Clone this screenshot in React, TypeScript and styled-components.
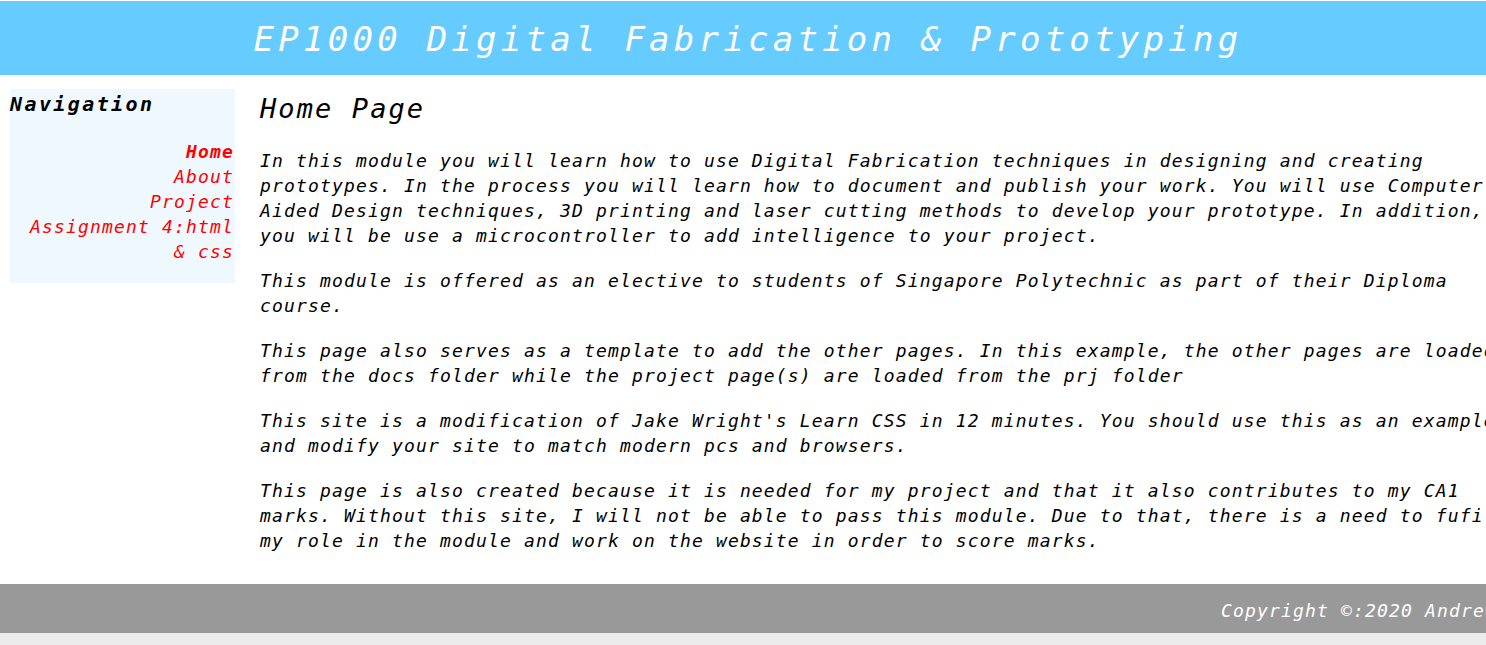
import React from "react";
import styled, { createGlobalStyle } from "styled-components";

const GlobalStyle = createGlobalStyle`
  html {
    background-color: #ececec;
    overflow: hidden;
  }
  body {
    margin: 0;
    font-family: "DejaVu Sans Mono", "Liberation Mono", monospace;
    font-style: italic;
    color: #000;
  }
`;

const Page = styled.div`
  background-color: #fff;
  padding-top: 1px;
`;

const Header = styled.header`
  display: flex;
  align-items: center;
  justify-content: center;
  height: 74px;
  background-color: #66ccff;
`;

const Title = styled.h1`
  margin: 0;
  padding: 2px 0 0 10px;
  font-size: 34px;
  font-weight: 400;
  letter-spacing: 4.25px;
  color: #fff;
  white-space: nowrap;
`;

const Body = styled.div`
  display: flex;
  align-items: flex-start;
  gap: 25px;
  padding: 14px 0 11px 10px;
`;

const Nav = styled.nav`
  flex-shrink: 0;
  width: 224px;
  padding: 0 1px 19px 0;
  background-color: #f0f8ff;
`;

const NavTitle = styled.h3`
  margin: 3px 0 22px;
  font-size: 20px;
  line-height: 25px;
  font-weight: 700;
  letter-spacing: 2.4px;
`;

const NavList = styled.ul`
  list-style: none;
  margin: 0;
  padding: 0;
  text-align: right;
`;

const NavLink = styled.a<{ $active?: boolean }>`
  font-size: 18px;
  line-height: 25px;
  letter-spacing: 1.16px;
  font-weight: ${(p) => (p.$active ? 700 : 400)};
  color: #ff0000;
  text-decoration: none;
`;

const Main = styled.main`
  flex-shrink: 0;
  width: 1258px;
`;

const Heading = styled.h2`
  margin: 3px 0 22px;
  font-size: 27px;
  line-height: 34px;
  font-weight: 400;
  letter-spacing: 2.1px;
`;

const Para = styled.p`
  margin: 0 0 20px;
  font-size: 18px;
  line-height: 25px;
  letter-spacing: 1.16px;
`;

const Footer = styled.footer`
  display: flex;
  height: 49px;
  box-sizing: border-box;
  padding-top: 14px;
  background-color: #999999;
`;

const FooterText = styled.p`
  margin: 0 0 0 1221px;
  font-size: 18px;
  line-height: 25px;
  letter-spacing: 1.16px;
  color: #fff;
  white-space: nowrap;
`;

const Bottom = styled.div`
  height: 12px;
  background-color: #ececec;
`;

const links = [
  { label: "Home", active: true },
  { label: "About" },
  { label: "Project" },
  { label: "Assignment 4:html & css" },
];

export default function App() {
  return (
    <>
      <GlobalStyle />
      <Page>
        <Header>
          <Title>EP1000 Digital Fabrication &amp; Prototyping</Title>
        </Header>
        <Body>
          <Nav>
            <NavTitle>Navigation</NavTitle>
            <NavList>
              {links.map((l) => (
                <li key={l.label}>
                  <NavLink href="#" $active={l.active}>
                    {l.label}
                  </NavLink>
                </li>
              ))}
            </NavList>
          </Nav>
          <Main>
            <Heading>Home Page</Heading>
            <Para>
              In this module you will learn how to use Digital Fabrication
              techniques in designing and creating prototypes. In the process
              you will learn how to document and publish your work. You will
              use Computer Aided Design techniques, 3D printing and laser
              cutting methods to develop your prototype. In addition, you will
              be use a microcontroller to add intelligence to your project.
            </Para>
            <Para>
              This module is offered as an elective to students of Singapore
              Polytechnic as part of their Diploma course.
            </Para>
            <Para>
              This page also serves as a template to add the other pages. In
              this example, the other pages are loaded from the docs folder
              while the project page(s) are loaded from the prj folder
            </Para>
            <Para>
              This site is a modification of Jake Wright's Learn CSS in 12
              minutes. You should use this as an example and modify your site
              to match modern pcs and browsers.
            </Para>
            <Para>
              This page is also created because it is needed for my project and
              that it also contributes to my CA1 marks. Without this site, I
              will not be able to pass this module. Due to that, there is a
              need to fufill my role in the module and work on the website in
              order to score marks.
            </Para>
          </Main>
        </Body>
        <Footer>
          <FooterText>Copyright ©:2020 Andrew Tan</FooterText>
        </Footer>
        <Bottom />
      </Page>
    </>
  );
}
